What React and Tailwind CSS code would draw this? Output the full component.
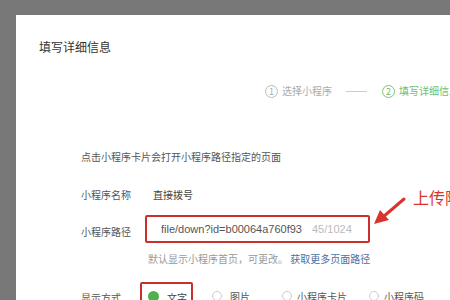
export default function App() {
  const cjk = { fontFamily: '"Noto Sans CJK SC", "Liberation Sans", sans-serif' }
  return (
    <div className="w-[450px] h-[300px] overflow-hidden bg-[#787878] pl-[16px] pt-[15px]" style={cjk}>
      <div className="relative h-full bg-white text-[#555] overflow-hidden">
        <div className="pl-[23px] pt-[24px] text-[12px] leading-[15px] text-[#333]">填写详细信息</div>

        <div className="mt-[30px] ml-[249px] w-max flex items-center whitespace-nowrap text-[10px] leading-[14px]">
          <span className="shrink-0 flex items-center text-[#aaa]">
            <span className="shrink-0 w-[13px] h-[13px] rounded-full border border-[#bbb] flex items-center justify-center text-[9px] leading-none">1</span>
            <span className="ml-[4px]">选择小程序</span>
          </span>
          <span className="shrink-0 ml-[14px] w-[21px] h-px bg-[#ccc]" />
          <span className="shrink-0 ml-[15px] flex items-center text-[#6cc06c]">
            <span className="shrink-0 w-[13px] h-[13px] rounded-full border border-[#7cc57c] flex items-center justify-center text-[9px] leading-none">2</span>
            <span className="ml-[4px]">填写详细信息</span>
          </span>
        </div>

        <div className="mt-[52px] ml-[65px] text-[10px] leading-[14px] whitespace-nowrap">点击小程序卡片会打开小程序路径指定的页面</div>

        <div className="mt-[24px] ml-[65px] flex items-center text-[10px] leading-[14px] whitespace-nowrap">
          <span className="w-[72px]">小程序名称</span>
          <span className="text-[#444]">直接拨号</span>
        </div>

        <div className="mt-[13px] ml-[65px] flex items-center text-[10px] whitespace-nowrap">
          <span className="w-[64px] mt-[4px]">小程序路径</span>
          <div className="w-[225px] h-[28px] border-2 border-[#c9302c] rounded-[2px] flex items-center pl-[14px] text-[11px]" style={{ fontFamily: '"Liberation Sans", sans-serif' }}>
            <span className="text-[#555]">file/down?id=b00064a760f93</span>
            <span className="ml-[10px] text-[#bbb]">45/1024</span>
          </div>
        </div>

        <div className="mt-[9px] ml-[132px] text-[10px] leading-[14px] whitespace-nowrap text-[#999]">
          默认显示小程序首页，可更改。 <span className="text-[#4a6fa5]">获取更多页面路径</span>
        </div>

        <div className="mt-[16px] ml-[65px] flex items-start text-[10px] whitespace-nowrap">
          <span className="w-[59px] mt-[8px]">显示方式</span>
          <div className="w-[53px] h-[24px] border-2 border-[#c9302c] rounded-[2px] flex items-start pt-[6px] pl-[6px]">
            <span className="w-[11px] h-[11px] rounded-full bg-[#4fb04f] mt-[1px]" />
            <span className="ml-[8px] text-[#444]">文字</span>
          </div>
          <span className="ml-[19px] mt-[9px] w-[10px] h-[10px] rounded-full border border-[#ccc]" />
          <span className="ml-[8px] mt-[7px]">图片</span>
          <span className="ml-[32px] mt-[9px] w-[10px] h-[10px] rounded-full border border-[#ccc]" />
          <span className="ml-[5px] mt-[7px]">小程序卡片</span>
          <span className="ml-[22px] mt-[9px] w-[10px] h-[10px] rounded-full border border-[#ccc]" />
          <span className="ml-[5px] mt-[7px]">小程序码</span>
        </div>

        <svg className="absolute left-[355px] top-[180px]" width="40" height="35" viewBox="0 0 40 35">
          <path d="M33 4 L12 22" stroke="#d9342b" strokeWidth="3" strokeLinecap="round" />
          <path d="M3 29 L9 15 L18 25 Z" fill="#d9342b" />
        </svg>
        <div className="absolute left-[397px] top-[172px] text-[16px] leading-[20px] text-[#d9342b] whitespace-nowrap">上传附件</div>
      </div>
    </div>
  )
}
